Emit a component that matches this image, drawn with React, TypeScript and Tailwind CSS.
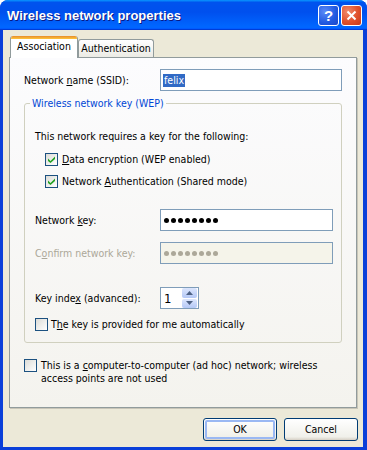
import { FC, ReactNode } from 'react'

const CheckBox: FC<{ checked?: boolean }> = ({ checked }) => (
  <span className="w-[13px] h-[13px] shrink-0 border border-[#1c5180] bg-[linear-gradient(135deg,#dcdcd7,#ffffff)] flex items-center justify-center">
    {checked && (
      <svg width="7" height="7" viewBox="0 0 7 7">
        <path d="M0 2.5 L2.5 5 L7 0.5 L7 3 L2.5 7 L0 5 Z" fill="#21a121" />
      </svg>
    )}
  </span>
)

const Dots: FC<{ disabled?: boolean }> = ({ disabled }) => (
  <div className="flex gap-[2px]">
    {[0, 1, 2, 3, 4, 5, 6, 7].map((i) => (
      <span
        key={i}
        className={disabled ? 'w-[5px] h-[5px] rounded-full bg-[#aca899]' : 'w-[5px] h-[5px] rounded-full bg-black'}
      />
    ))}
  </div>
)

const Label: FC<{ children: ReactNode; disabled?: boolean; width: string }> = ({ children, disabled, width }) => (
  <span className={`${width} shrink-0 ${disabled ? 'text-[#aca899]' : 'text-black'}`}>{children}</span>
)

const XpButton: FC<{ children: ReactNode; primary?: boolean }> = ({ children, primary }) => (
  <button className="w-[74px] h-[23px] rounded-[3px] border border-[#003c74] bg-[linear-gradient(to_bottom,#ffffff,#f0f0ea_85%,#d6d0c5)] p-[1px]">
    <span
      className={
        primary
          ? 'flex w-full h-full items-center justify-center rounded-[2px] border-2 border-[#9ab8f3] text-black'
          : 'flex w-full h-full items-center justify-center text-black'
      }
    >
      {children}
    </span>
  </button>
)

export default function App() {
  return (
    <div className="w-[367px] h-[450px] flex flex-col bg-[#0a3fd9] rounded-t-[8px] overflow-hidden text-[10.5px] leading-[13px] font-['DejaVu_Sans_Condensed','Liberation_Sans',sans-serif]">
      {/* Title bar */}
      <div className="h-[30px] shrink-0 flex items-center pl-[7px] pr-[5px] bg-[linear-gradient(180deg,#0997ff,#0053ee_8%,#0050ee_40%,#0066ff_88%,#0066ff_93%,#005bff_95%,#003dd7_96%,#003dd7)]">
        <span className="flex-1 text-white font-bold text-[13px] font-['Liberation_Sans',sans-serif] [text-shadow:1px_1px_#0a1883]">
          Wireless network properties
        </span>
        <div className="flex gap-[2px]">
          <div className="w-[21px] h-[21px] rounded-[3px] border border-white bg-[radial-gradient(circle_at_30%_30%,#5a8af8,#2059e0_60%,#1d46c9)] flex items-center justify-center text-white font-bold text-[15px] font-['Liberation_Sans',sans-serif]">
            ?
          </div>
          <div className="w-[21px] h-[21px] rounded-[3px] border border-white bg-[radial-gradient(circle_at_30%_30%,#f08a6c,#e0502b_55%,#c4391b)] flex items-center justify-center">
            <svg width="11" height="11" viewBox="0 0 11 11">
              <path d="M1.5 1.5 L9.5 9.5 M9.5 1.5 L1.5 9.5" stroke="white" strokeWidth="2" />
            </svg>
          </div>
        </div>
      </div>

      {/* Body */}
      <div className="flex-1 flex flex-col ml-[3px] mr-[4px] mb-[3px] bg-[#ece9d8] pt-[6px] px-[6px] pb-[6px]">
        {/* Tabs */}
        <div className="flex items-end pl-[1px] h-[21px]">
          <div className="relative z-10 w-[68px] h-[22px] mb-[-1px] flex flex-col border border-t-0 border-b-0 border-[#919b9c] bg-white rounded-t-[3px] overflow-hidden">
            <div className="h-[3px] bg-[linear-gradient(to_bottom,#e68b2c,#ffc73c)]" />
            <div className="flex-1 flex items-start justify-center pt-[1px]">Association</div>
          </div>
          <div className="w-[76px] h-[18px] flex items-center justify-center border border-b-0 border-[#919b9c] rounded-t-[3px] bg-[linear-gradient(to_bottom,#ffffff,#ecebe5)]">
            Authentication
          </div>
        </div>

        {/* Tab panel */}
        <div className="flex-1 flex flex-col border border-[#919b9c] shadow-[1px_1px_0_#c8c5b8] bg-[linear-gradient(to_bottom,#fcfcfe,#f4f3ee)] pt-[11px] px-[14px]">
          <div className="h-[22px] flex items-center">
            <Label width="w-[136px]">
              Network <u>n</u>ame (SSID):
            </Label>
            <div className="w-[182px] h-[22px] border border-[#7f9db9] bg-white flex items-center pl-[2px]">
              <span className="bg-[#316ac5] text-white px-[1px]">felix</span>
            </div>
          </div>

          <fieldset className="mt-[6px] border border-[#d0d0bf] rounded-[3px] pl-[10px] pb-[11px]">
            <legend className="ml-[-5px] px-[2px] text-[#0046d5]">Wireless network key (WEP)</legend>
            <div className="pt-[20px]">This network requires a key for the following:</div>
            <div className="mt-[10px] ml-[10px] flex items-center gap-[4px]">
              <CheckBox checked />
              <span>
                <u>D</u>ata encryption (WEP enabled)
              </span>
            </div>
            <div className="mt-[9px] ml-[10px] flex items-center gap-[4px]">
              <CheckBox checked />
              <span>
                Network <u>A</u>uthentication (Shared mode)
              </span>
            </div>

            <div className="mt-[21px] h-[22px] flex items-center">
              <Label width="w-[125px]">
                Network <u>k</u>ey:
              </Label>
              <div className="w-[173px] h-[22px] border border-[#7f9db9] bg-white flex items-center pl-[3px]">
                <Dots />
              </div>
            </div>
            <div className="mt-[11px] h-[22px] flex items-center">
              <Label width="w-[125px]" disabled>
                C<u>o</u>nfirm network key:
              </Label>
              <div className="w-[173px] h-[22px] border border-[#7f9db9] bg-[#f5f4ea] flex items-center pl-[3px]">
                <Dots disabled />
              </div>
            </div>

            <div className="mt-[23px] h-[22px] flex items-center">
              <Label width="w-[125px]">
                Key inde<u>x</u> (advanced):
              </Label>
              <div className="w-[39px] h-[22px] border border-[#7f9db9] bg-white flex items-center">
                <span className="flex-1 pl-[3px] text-[13px]">1</span>
                <div className="w-[16px] h-[20px] flex flex-col gap-px pr-px">
                  <div className="flex-1 rounded-[2px] bg-[linear-gradient(to_bottom,#dce6fd,#b4c8f6)] flex items-center justify-center">
                    <svg width="7" height="4" viewBox="0 0 7 4">
                      <path d="M0 4 L3.5 0 L7 4 Z" fill="#4d6185" />
                    </svg>
                  </div>
                  <div className="flex-1 rounded-[2px] bg-[linear-gradient(to_bottom,#dce6fd,#b4c8f6)] flex items-center justify-center">
                    <svg width="7" height="4" viewBox="0 0 7 4">
                      <path d="M0 0 L3.5 4 L7 0 Z" fill="#4d6185" />
                    </svg>
                  </div>
                </div>
              </div>
            </div>

            <div className="mt-[9px] flex items-center gap-[3px]">
              <CheckBox />
              <span>
                T<u>h</u>e key is provided for me automatically
              </span>
            </div>
          </fieldset>

          <div className="mt-[16px] flex items-start gap-[4px]">
            <CheckBox />
            <span>
              This is a <u>c</u>omputer-to-computer (ad hoc) network; wireless
              <br />
              access points are not used
            </span>
          </div>
        </div>

        {/* Buttons */}
        <div className="mt-[10px] mr-[-1px] flex justify-end gap-[7px]">
          <XpButton primary>OK</XpButton>
          <XpButton>Cancel</XpButton>
        </div>
      </div>
    </div>
  )
}
